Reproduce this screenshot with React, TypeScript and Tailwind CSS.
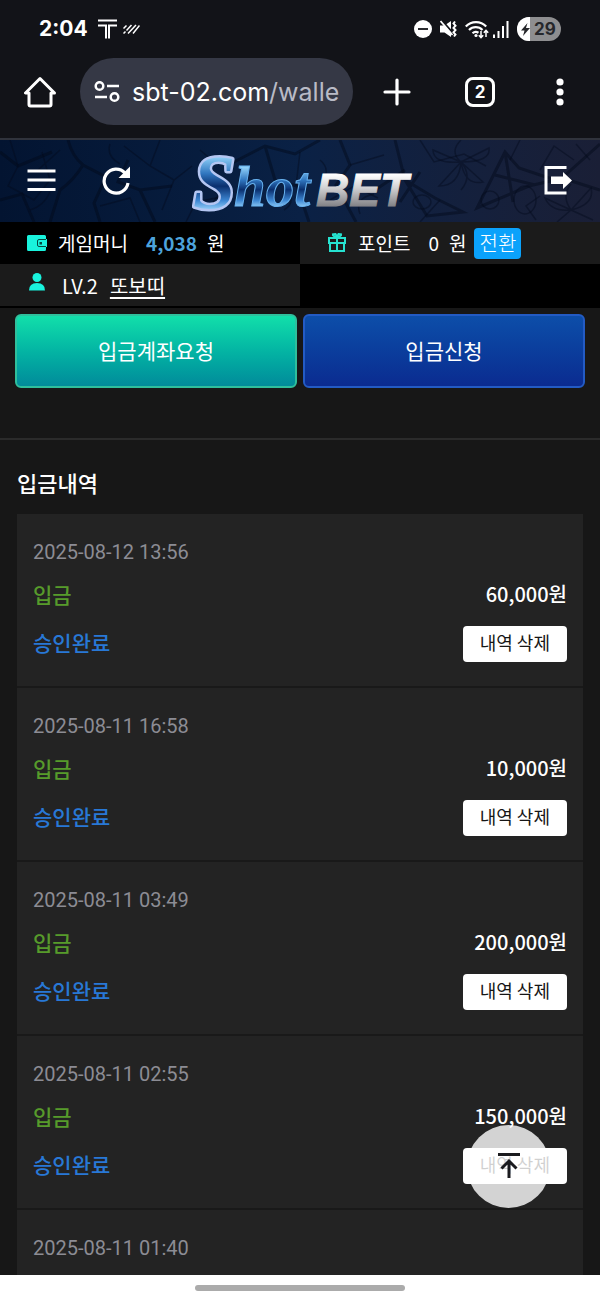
import React from 'react';

interface Deposit {
  date: string;
  amount: string;
}

const deposits: Deposit[] = [
  { date: '2025-08-12 13:56', amount: '60,000' },
  { date: '2025-08-11 16:58', amount: '10,000' },
  { date: '2025-08-11 03:49', amount: '200,000' },
  { date: '2025-08-11 02:55', amount: '150,000' },
  { date: '2025-08-11 01:40', amount: '' },
];

function StatusBar() {
  return (
    <div className="flex h-[58px] items-center justify-between px-[39px] text-white">
      <div className="flex items-center gap-2.5">
        <span className="text-[21px] leading-7 font-bold">2:04</span>
        <svg width="19" height="20" viewBox="0 0 19 20" fill="none" stroke="currentColor" strokeWidth="2">
          <path d="M0 1.500h19M0 6.500h8v13M19 6.500h-8v13" />
        </svg>
        <svg className="-ml-1" width="17" height="10" viewBox="0 0 17 10" fill="none" stroke="currentColor" strokeWidth="1.500">
          <path d="M0.500 4.500l3-3M0.500 9.500l2-2M3.500 6.500l5-5.500M5 9.500l8-8.500M10 9.500l6.500-8" />
        </svg>
      </div>
      <div className="flex items-center gap-2">
        <svg width="18" height="18" viewBox="0 0 18 18">
          <circle cx="9" cy="9" r="9" fill="#fff" />
          <path d="M4 9h10" stroke="#121318" strokeWidth="1.800" />
        </svg>
        <svg width="17" height="18" viewBox="0 0 17 18" fill="none">
          <path d="M0 5.500h4.500L11 1v16l-6.500-4.500H0z" fill="#fff" />
          <path d="M1.500 0l13 15" stroke="#121318" strokeWidth="2" />
          <path d="M0.500 1l12 14" stroke="#fff" strokeWidth="1.800" />
          <path d="M15 1.500l-1.500 2 2 2.200-2 2.200 2 2.200-2 2.200 2 2.200-1.500 2" stroke="#fff" strokeWidth="2" />
        </svg>
        <svg width="24" height="19" viewBox="0 0 24 19" fill="none" stroke="#fff" strokeWidth="2.200">
          <path d="M0.800 6.500a14 14 0 0 1 20.400 0M4 10a9.500 9.500 0 0 1 13.500 0M7.500 13.200a5 5 0 0 1 6-.5" />
          <circle cx="11" cy="15.500" r="1.600" fill="#fff" stroke="none" />
          <path d="M16 11v6.500M13.800 15.300l2.200 2.400 2.200-2.400M21 17v-6.500M18.800 12.700l2.200-2.400 2.200 2.400" strokeWidth="1.500" />
        </svg>
        <svg className="-ml-1" width="16" height="17" viewBox="0 0 16 17" fill="#fff">
          <path d="M0 13.500h2V17H0zM4.500 10h2v7h-2zM9 5h2v12H9zM13.500 0h2v17h-2z" />
        </svg>
        <div className="flex h-6 w-11 items-center overflow-hidden rounded-full bg-[#8e8e90] text-[#26272b]">
          <span className="flex h-full w-[13px] items-center justify-end bg-white">
            <svg width="9" height="13" viewBox="0 0 9 13" fill="#26272b">
              <path d="M6.500 0L0 7.500h3.500L2 13l7-8H5z" />
            </svg>
          </span>
          <span className="pl-1 text-[17px] leading-6 font-bold">29</span>
        </div>
      </div>
    </div>
  );
}

function BrowserBar() {
  return (
    <div className="flex h-20 items-start text-white">
      <button aria-label="Home" className="flex h-[67px] w-20 items-center justify-center">
        <svg width="32" height="32" viewBox="0 0 32 32" fill="none" stroke="#fff" strokeWidth="3" strokeLinejoin="round">
          <path d="M1.500 17h3.500v11.500q0 1.500 1.500 1.500h19q1.500 0 1.500-1.500V17h3.500L16 2.500z" />
        </svg>
      </button>
      <button aria-label="Address" className="flex h-[67px] min-w-0 flex-1 items-center rounded-full bg-[#353845] pl-3.5">
        <svg className="mr-3 shrink-0" width="26" height="22" viewBox="0 0 26 22" fill="none" stroke="#fff" strokeWidth="2.500">
          <circle cx="5.500" cy="5" r="3.800" />
          <circle cx="20.500" cy="16" r="3.800" />
          <path d="M13 5h12M1 16h12" />
        </svg>
        <span className="text-[25px] leading-8 whitespace-nowrap">
          sbt-02.com<span className="text-[#b9bbc6]">/walle</span>
        </span>
      </button>
      <button aria-label="New tab" className="flex h-[67px] w-[87px] items-center justify-center">
        <svg width="28" height="28" viewBox="0 0 28 28" stroke="#fff" strokeWidth="3.200" strokeLinecap="round">
          <path d="M14 2v24M2 14h24" />
        </svg>
      </button>
      <button aria-label="Tabs" className="flex h-[67px] w-20 items-center justify-center">
        <span className="flex size-[30px] items-center justify-center rounded-lg border-3 border-white text-[17px] leading-5 font-bold">2</span>
      </button>
      <button aria-label="Menu" className="flex h-[67px] w-20 items-center justify-center">
        <svg width="8" height="28" viewBox="0 0 8 28" fill="#fff">
          <circle cx="4" cy="4" r="3.600" />
          <circle cx="4" cy="14" r="3.600" />
          <circle cx="4" cy="24" r="3.600" />
        </svg>
      </button>
    </div>
  );
}

function Cracks() {
  return (
    <svg className="absolute inset-0 size-full" viewBox="0 0 600 82" preserveAspectRatio="xMidYMid slice" fill="none">
      <g stroke="#020818" strokeOpacity=".45" strokeWidth="3">
        <path d="M68 0q4 16 15 25l23 12-12 26 6 19M83 25Q74 40 60 50l-10 32M128 20l-10 22 22 8 32-4M0 12l18 14 34-14M0 60l22-6 12 28M140 50l15 32M230 24l35-18 30 8 25-14M265 6l10 34 22 6 12 36M340 0l10 25-14 20 20 37M395 0l10 40 30 18 28 14-36 4-22-36M400 62l20-30" />
        <path d="M505 12l-28 56 52-22 26-6-36-12zM600 4l-38 34 38 12M405 30l-30 20M505 12l8 50M495 35l40 10" />
      </g>
      <g stroke="#050b1c" strokeOpacity=".45" strokeWidth="1.500">
        <path d="M10 0l8 26-10 20 26 14 16-20-8-28M60 10l-22 20M100 66l30-8 10 24M160 0l-10 26 24 14 18-14M174 40l-12 30M200 10l14 12M330 60l24-14 24 12M300 12l-4 34M420 0l14 22 30-8 22 12M150 26l-26-20M186 82l10-20 30-6" />
        <path d="M461 22l-28-12q0 14 28 12zM461 22l28-14q2 14-28 14zM461 22l-22 24q20 0 22-24zM461 22l22 20q-18 4-22-20zM461 22q-12-10 0-22M461 22q12 14 0 28M571 70l-26-12q6 14 26 12zM571 70l20-22q4 16-20 22zM571 70l-14 12M571 70l22 10M571 70q-10-14 0-26" />
        <path d="M30 70q14-4 20-18M110 4q-4 12 10 20M210 70q6-20 24-18M360 74q-6-16 14-20M320 20q10 8 4 20M284 70q10-6 6-16M536 80l-10-14 14-10M590 20l-14-16" />
        <circle cx="490" cy="60" r="9" />
        <ellipse cx="525" cy="60" rx="11" ry="14" />
        <ellipse cx="422" cy="62" rx="9" ry="7" />
        <path d="M540 30l14-24 20 14M440 60l-20 22M350 25l34-10M520 0l-10 20" />
      </g>
    </svg>
  );
}

function Logo() {
  return (
    <svg width="226" height="82" viewBox="0 0 226 82" role="img" aria-label="ShotBET">
      <defs>
        <linearGradient id="shot" x1="0" y1="0" x2="0" y2="1">
          <stop offset=".2" stopColor="#8fd0f8" />
          <stop offset=".4" stopColor="#3076bf" />
          <stop offset=".55" stopColor="#0a2f6e" />
          <stop offset=".72" stopColor="#3c86d2" />
          <stop offset=".85" stopColor="#a5dcff" />
        </linearGradient>
        <linearGradient id="bet" x1="0" y1="0" x2="0" y2="1">
          <stop offset=".2" stopColor="#fff" />
          <stop offset=".45" stopColor="#d3d3d5" />
          <stop offset=".8" stopColor="#858589" />
        </linearGradient>
      </defs>
      <g fontFamily="Liberation Serif, serif" fontStyle="italic" fontWeight="700" fill="url(#shot)">
        <text x="5" y="68" fontSize="76" stroke="#b4c6f2" strokeWidth="5" strokeLinejoin="round" paintOrder="stroke">S</text>
        <text x="46" y="66" fontSize="57" stroke="#68b2ef" strokeWidth="1">hot</text>
      </g>
      <text x="128" y="66" fontSize="46" fontFamily="Liberation Sans, sans-serif" fontStyle="italic" fontWeight="700" fill="url(#bet)" stroke="url(#bet)" strokeWidth="1">BET</text>
    </svg>
  );
}

function SiteHeader() {
  return (
    <header className="relative flex h-[84px] items-center justify-between border-t-2 border-[#30333c] bg-linear-to-r from-[#031431] via-[#0a2145] to-[#1a1f36] px-[26px]">
      <Cracks />
      <div className="relative flex items-center gap-11">
        <button aria-label="메뉴">
          <svg width="31" height="24" viewBox="0 0 31 24" stroke="#fff" strokeWidth="3">
            <path d="M1.500 2h28M1.500 11h28M1.500 20.500h28" />
          </svg>
        </button>
        <button aria-label="새로고침">
          <svg width="30" height="30" viewBox="0 0 30 30" fill="none">
            <path d="M24 7A12 12 0 1 0 27 17" stroke="#fff" strokeWidth="3.200" />
            <path d="M29 0.500V12H17.500z" fill="#fff" />
          </svg>
        </button>
      </div>
      <a href="#" className="relative ml-3">
        <Logo />
      </a>
      <button aria-label="로그아웃" className="relative ml-[86px]">
        <svg width="30" height="30" viewBox="0 0 30 30" fill="none">
          <path d="M22.500 1.500H2v25.500h20.500" stroke="#fff" strokeWidth="3" />
          <path d="M7 10.500h12V6l9 8.500-9 8.500v-5H7z" fill="#fff" />
        </svg>
      </button>
    </header>
  );
}

function AccountInfo() {
  return (
    <section className="grid grid-cols-2 border-b-2 border-black bg-black text-[19px] leading-10 text-white">
      <div className="flex h-[42px] items-center pl-[27px]">
        <svg width="20" height="18" viewBox="0 0 20 18">
          <path d="M1.500 1h16q1.500 0 1.500 1.500V5h1v8h-1v2.500q0 1.500-1.500 1.500h-16Q0 17 0 15.500v-13Q0 1 1.500 1z" fill="#19f3dd" />
          <path d="M19 5.500h-7q-1.500 0-1.500 1.500v4q0 1.500 1.500 1.500h7" fill="none" stroke="#05483f" />
          <rect x="12.500" y="8" width="2.500" height="2.500" fill="#05483f" />
        </svg>
        <span className="ml-[11px]">게임머니</span>
        <span className="ml-[18px] font-bold text-[#4da3dc]">4,038</span>
        <span className="ml-2.5">원</span>
      </div>
      <div className="flex h-[42px] items-center bg-[#1b1b1b] pl-[27px]">
        <svg width="20" height="20" viewBox="0 0 20 20" fill="none" stroke="#26e2d0" strokeWidth="2">
          <path d="M2 5h16v5H2zM3 10h14v8H3zM10 5v13M9.500 5L5.500 2M10.500 5l4-3M5 1.500l3.500-.5L10 4l1.500-3 3.500.5" />
        </svg>
        <span className="ml-[11px]">포인트</span>
        <span className="ml-[18px]">0</span>
        <span className="ml-2.5">원</span>
        <button className="ml-2 h-[31px] rounded bg-[#0ba2fb] px-[5px] text-[20px] leading-[30px] font-light">전환</button>
      </div>
      <div className="flex h-[42px] items-center bg-[#1b1b1b] pt-0.5 pl-[28px] text-[20px]">
        <svg className="-mt-2" width="18" height="20" viewBox="0 0 18 20" fill="#19f3dd">
          <circle cx="9" cy="5.500" r="4.500" />
          <path d="M1 18.500q0-7.500 8-7.500t8 7.500z" />
        </svg>
        <span className="ml-4">LV.2</span>
        <a href="#" className="ml-3 underline underline-offset-3">또보띠</a>
      </div>
    </section>
  );
}

function DepositItem({ deposit }: { deposit: Deposit }) {
  return (
    <li className="border-b-2 border-[#191919] bg-[#232323] px-4 pt-6 pb-6">
      <time className="block font-[Roboto,sans-serif] text-[20px] leading-7 text-[#8c8c94]">{deposit.date}</time>
      <div className="mt-3.5 flex items-center justify-between leading-7 font-medium">
        <span className="text-[21px] text-[#579b2b]">입금</span>
        {deposit.amount && <span className="text-[20px] text-white">{deposit.amount}원</span>}
      </div>
      <div className="mt-4 flex h-[38px] items-start justify-between">
        <span className="text-[21px] leading-9 font-medium text-[#2878d6]">승인완료</span>
        <button className="mt-0.5 h-9 rounded bg-white px-[17px] pb-1 text-[18px] leading-8 text-[#161616]">내역 삭제</button>
      </div>
    </li>
  );
}

function App() {
  return (
    <div className="flex h-screen flex-col bg-[#121318]">
      <div className="shrink-0 font-[Inter,sans-serif]">
        <StatusBar />
        <BrowserBar />
      </div>

      <div className="relative min-h-0 flex-1 overflow-hidden bg-[#171717] font-['Noto_Sans_CJK_KR',sans-serif]">
        <SiteHeader />
        <AccountInfo />

        <div className="grid grid-cols-2 gap-1.5 border-b-2 border-[#2b2b2b] px-[15px] pt-1.5 pb-[50px] text-[21px] text-white">
          <button className="h-[74px] rounded-md border-2 border-[#2fbf9c] bg-linear-to-b from-[#12dfaa] to-[#028b9a]">입금계좌요청</button>
          <button className="h-[74px] rounded-md border-2 border-[#235bc4] bg-linear-to-b from-[#0d4ea9] to-[#0b2b90]">입금신청</button>
        </div>

        <main className="px-[17px] pt-6">
          <h1 className="mb-3.5 text-[22px] leading-9 font-medium text-white">입금내역</h1>
          <ul>
            {deposits.map((deposit) => (
              <DepositItem key={deposit.date} deposit={deposit} />
            ))}
          </ul>
        </main>

        {/* Scroll to top */}
        <button aria-label="맨 위로" className="absolute right-[50px] bottom-[67px] flex size-[83px] items-center justify-center rounded-full bg-white/80">
          <svg className="mb-1" width="24" height="28" viewBox="0 0 24 28" fill="none" stroke="#1b1b1f" strokeWidth="3">
            <path d="M1 3.500h22M12 27V10M4.500 17.500L12 10l7.500 7.500" />
          </svg>
        </button>
      </div>

      {/* Gesture bar */}
      <div className="flex h-[25px] shrink-0 items-center justify-center bg-white">
        <div className="h-1.5 w-[210px] rounded-full bg-[#ababab]" />
      </div>
    </div>
  );
}

export default App;
